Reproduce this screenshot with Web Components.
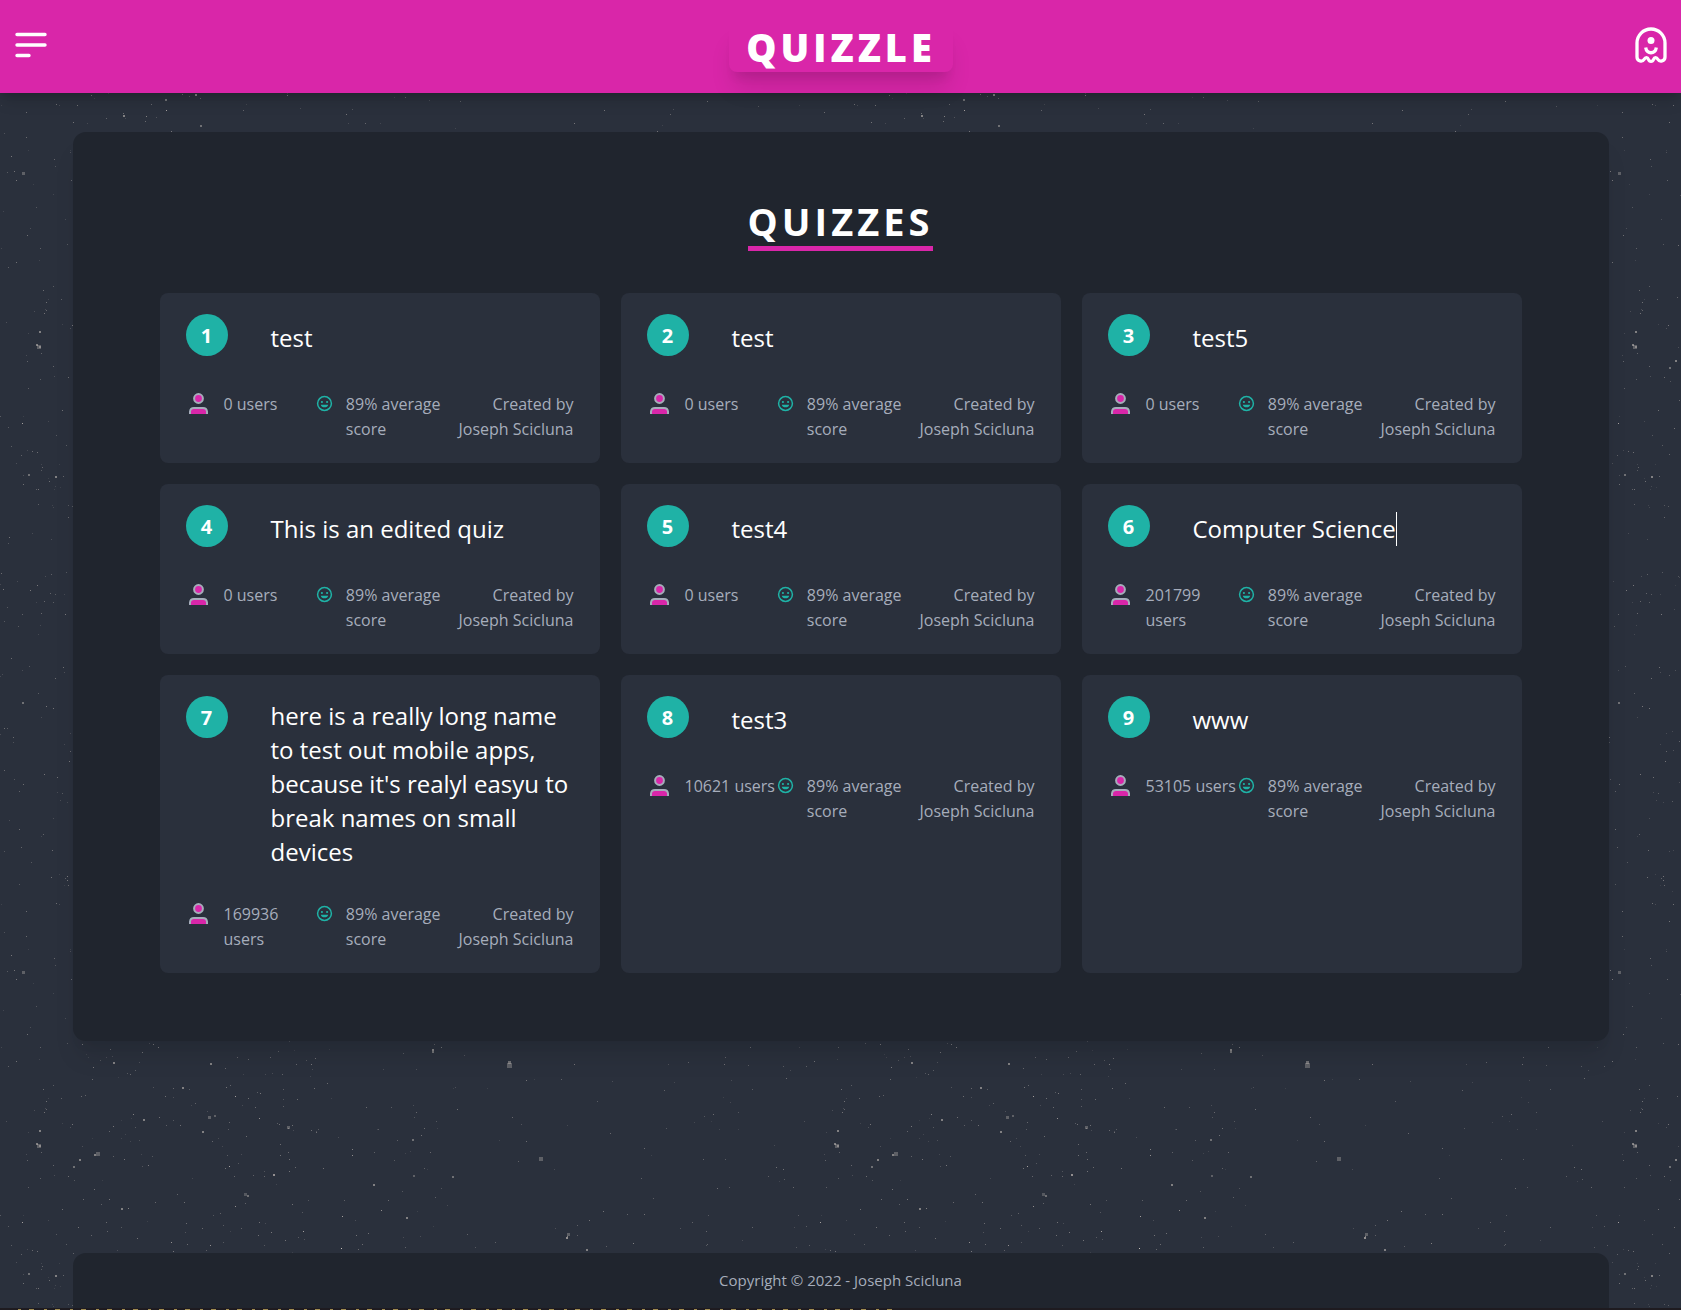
<!DOCTYPE html>
<html lang="en">
<head>
<meta charset="utf-8">
<meta name="viewport" content="width=device-width, initial-scale=1">
<title>Quizzle</title>
<style>
  html { --primary:#d926a9; --accent:#1fb2a6; --base:#2a303c; --panel:#20252e; --text:#a6adbb; }
  body { margin:0; background:var(--base); color:var(--text); font:16px/25px "Open Sans","Noto Sans",sans-serif; }
</style>
</head>
<body>
<quiz-app></quiz-app>
<script>
class StarField extends HTMLElement {
  connectedCallback() {
    const root = this.attachShadow({ mode: 'open' });
    const T = 798;
    // bright specks: x, y, size, opacity
    const marks = [
      [37,345,4,.3],[36,344,2,.5],[39,346,2,.4],[39,331,2,.5],[96,353,4,.3],[94,355,2,.5],[79,360,2,.5],[73,367,2,.4],
      [507,264,5,.3],[508,262,3,.4],[432,250,2,.5],[432,252,2,.4],[208,317,3,.3],[202,332,2,.5],[214,316,2,.3],
      [273,375,2,.6],[244,394,3,.25],[247,396,2,.4],[121,409,2,.5],[128,409,1,.5],[373,385,2,.5],[539,358,4,.3],
      [452,377,2,.4],[406,418,2,.5],[413,376,2,.3],[412,340,2,.4],[421,336,1,.4],[287,327,3,.3],[292,326,1,.4],
      [352,356,1,.6],[352,350,1,.5],[235,297,1,.7],[259,319,1,.6],[229,367,1,.7],[341,449,1,.9],[342,417,1,.7],
      [303,432,1,.7],[381,411,1,.6],[235,407,1,.6],[182,288,2,.5],[143,320,2,.5],[133,315,1,.5],[113,263,2,.5],
      [210,264,2,.5],[22,423,1,.7],[210,446,1,.6],[171,443,1,.6],[62,410,1,.4],[55,476,2,.5],[28,474,2,.4],
      [123,115,2,.5],[146,116,1,.5],[165,99,2,.4],[195,94,2,.5],[166,110,1,.7],[200,125,2,.4],[22,172,3,.3],
      [22,702,2,.4],[567,437,1,.5],[567,434,3,.3],[566,438,2,.6],[586,450,2,.5],[633,444,1,.5]
    ];
    let dots = marks.map(([x, y, s, o]) => `<rect x="${x}" y="${y}" width="${s}" height="${s}" opacity="${o}"/>`).join('');
    let seed = 7;
    const rnd = () => (seed = (seed * 16807) % 2147483647) / 2147483647;
    for (let i = 0; i < 1700; i++) {
      const x = Math.floor(rnd() * T), y = Math.floor(rnd() * T), keep = rnd(), o = .1 + rnd() * .35;
      const density = x < 320 ? 1 : x < 460 ? .6 : x < 690 ? .25 : .4;
      if (keep < density) dots += `<rect x="${x}" y="${y}" width="1" height="1" opacity="${o.toFixed(2)}"/>`;
    }
    root.innerHTML = `<style>
        :host{position:absolute;inset:0;overflow:hidden;z-index:-1}
        svg{display:block;width:100%;height:100%}
      </style>
      <svg aria-hidden="true"><defs><pattern id="p" width="798" height="799" patternUnits="userSpaceOnUse">
      <g fill="#d8cfc8" shape-rendering="crispEdges">${dots}</g></pattern></defs><rect width="100%" height="100%" fill="url(#p)"/></svg>`;
  }
}
customElements.define('star-field', StarField);

class SiteHeader extends HTMLElement {
  connectedCallback() {
    this.attachShadow({ mode: 'open' }).innerHTML = `<style>
      :host{display:block;position:relative}
      header{display:flex;align-items:center;justify-content:space-between;height:93px;padding:0 12px 0 13px;box-sizing:border-box;background:var(--primary);
        box-shadow:0 10px 15px -3px rgba(0,0,0,.15),0 4px 6px -2px rgba(0,0,0,.1)}
      button{display:flex;padding:0;border:0;background:none;color:#fff;cursor:pointer}
      a{display:block;padding:0 17px;border-radius:8px;color:#fff;text-decoration:none;font-size:38px;line-height:50px;font-weight:800;letter-spacing:4px;
        box-shadow:0 20px 25px -5px rgba(0,0,0,.12),0 10px 10px -5px rgba(0,0,0,.08)}
    </style>
    <header>
      <button aria-label="Menu"><svg width="36" height="36" viewBox="0 0 36 36" fill="none" stroke="currentColor" stroke-width="3.4" stroke-linecap="round"><path d="M4 5.5H32M4 16H32M4 26.500H16"/></svg></button>
      <a href="#">QUIZZLE</a>
      <button aria-label="Profile"><svg width="36" height="40" viewBox="0 2 36 40" fill="none" stroke="currentColor" stroke-width="3.3" stroke-linejoin="round" stroke-linecap="round"><path d="M4 32V18A14 14 0 0 1 32 18V32C32 36.500 26.500 37 25 34.500C23.500 32 21.500 32 20.500 34.500C19.500 37 16.500 37 15.500 34.500C14.500 32 12.500 32 11 34.500C9.500 37 4 36.500 4 32Z"/><circle cx="18" cy="15.500" r="3.500" fill="currentColor" stroke="none"/><path d="M12.700 22.500C13.500 29.500 22.500 29.500 23.300 22.500" stroke-linecap="butt"/></svg></button>
    </header>`;
  }
}
customElements.define('site-header', SiteHeader);

class StatItem extends HTMLElement {
  connectedCallback() {
    const icons = {
      user: `<svg class="user" width="25" height="25" viewBox="0 1 25 25" stroke="#a6adbb" stroke-width="2" fill="#d926a9"><circle cx="12.500" cy="7.500" r="4.400"/><path d="M4 23V20.500A4 4 0 0 1 8 17H17A4 4 0 0 1 21 20.500V23"/></svg>`,
      smile: `<svg class="smile" width="17" height="17" viewBox="0 0 17 17" fill="#1fb2a6"><circle cx="8.500" cy="8.500" r="6.900" fill="none" stroke="#1fb2a6" stroke-width="1.500"/><circle cx="5.900" cy="7" r="1.100"/><circle cx="11.100" cy="7" r="1.100"/><path d="M4.800 9.700H12.200A3.800 3.400 0 0 1 4.800 9.700Z"/></svg>`
    };
    const icon = this.getAttribute('icon');
    this.attachShadow({ mode: 'open' }).innerHTML = `<style>
      :host{display:flex;align-items:flex-start;min-width:0}
      :host([end]){justify-content:flex-end;text-align:right}
      svg{flex:none}
      .user{margin-right:13px}
      .smile{margin:3px 13px 0 1px}
    </style>${icons[icon] || ''}<span><slot></slot></span>`;
  }
}
customElements.define('stat-item', StatItem);

class QuizCard extends HTMLElement {
  connectedCallback() {
    this.attachShadow({ mode: 'open' }).innerHTML = `<style>
      :host{display:block;padding:21px 26px;border-radius:8px;background:var(--base)}
      .top{display:grid;grid-template-columns:42px minmax(0,1fr);column-gap:43px;align-items:center;min-height:42px;margin-bottom:36px}
      .num{align-self:start;display:grid;place-items:center;width:42px;height:42px;border-radius:50%;background:var(--accent);color:#fff;font-size:20px;font-weight:700}
      h2{margin:3px 0 -3px;font-size:24px;line-height:34px;font-weight:400;color:#fff}
      :host([editing]) h2{justify-self:start;border-right:1px solid #fff}
      .stats{display:grid;grid-template-columns:repeat(3,minmax(0,1fr))}
    </style>
    <div class="top"><span class="num">${this.getAttribute('number')}</span><h2><slot></slot></h2></div>
    <div class="stats">
      <stat-item icon="user">${this.getAttribute('users')} users</stat-item>
      <stat-item icon="smile">89% average score</stat-item>
      <stat-item end>Created by<br>Joseph Scicluna</stat-item>
    </div>`;
  }
}
customElements.define('quiz-card', QuizCard);

class QuizPanel extends HTMLElement {
  connectedCallback() {
    this.attachShadow({ mode: 'open' }).innerHTML = `<style>
      :host{display:block;box-sizing:border-box;width:calc(100% - 32px);max-width:1536px;margin:39px auto;padding:65px 87px 68px;border-radius:13px;background:var(--panel);
        box-shadow:0 20px 25px -5px rgba(0,0,0,.1),0 10px 10px -5px rgba(0,0,0,.04)}
      h1{width:fit-content;margin:0 auto 42px;padding-bottom:1px;font-size:38px;line-height:48px;font-weight:700;letter-spacing:4px;color:#fff;border-bottom:5px solid var(--primary)}
      .grid{display:grid;grid-template-columns:repeat(3,minmax(0,1fr));gap:21px}
      @media(max-width:1200px){:host{padding:40px 24px}.grid{grid-template-columns:1fr}}
    </style><h1>QUIZZES</h1><div class="grid"><slot></slot></div>`;
  }
}
customElements.define('quiz-panel', QuizPanel);

class SiteFooter extends HTMLElement {
  connectedCallback() {
    this.attachShadow({ mode: 'open' }).innerHTML = `<style>
      :host{display:block;margin-top:auto}
      footer{box-sizing:border-box;width:calc(100% - 32px);max-width:1536px;margin:0 auto;padding:15px;border-radius:13px 13px 0 0;background:var(--panel);text-align:center;font-size:15px}
      .edge{height:2px;background:repeating-linear-gradient(90deg,#a08c50 0 3px,transparent 3px 11px,#a08c50 11px 16px,transparent 16px 26px) 18px 1px/880px 1px no-repeat,#1e1b20}
    </style><footer>Copyright © 2022 - Joseph Scicluna</footer><div class="edge"></div>`;
  }
}
customElements.define('site-footer', SiteFooter);

class QuizApp extends HTMLElement {
  connectedCallback() {
    const quizzes = [
      ['test', '0'], ['test', '0'], ['test5', '0'],
      ['This is an edited quiz', '0'], ['test4', '0'], ['Computer Science', '201799', true],
      ["here is a really long name to test out mobile apps, because it's realyl easyu to break names on small devices", '169936'],
      ['test3', '10621'], ['www', '53105']
    ];
    this.attachShadow({ mode: 'open' }).innerHTML = `<style>
      :host{display:flex;flex-direction:column;min-height:100vh;position:relative;isolation:isolate}
    </style>
    <star-field></star-field>
    <site-header></site-header>
    <quiz-panel>${quizzes.map(([t, u, e], i) => `<quiz-card number="${i + 1}" users="${u}"${e ? ' editing' : ''}>${t}</quiz-card>`).join('')}</quiz-panel>
    <site-footer></site-footer>`;
  }
}
customElements.define('quiz-app', QuizApp);
</script>
</body>
</html>
